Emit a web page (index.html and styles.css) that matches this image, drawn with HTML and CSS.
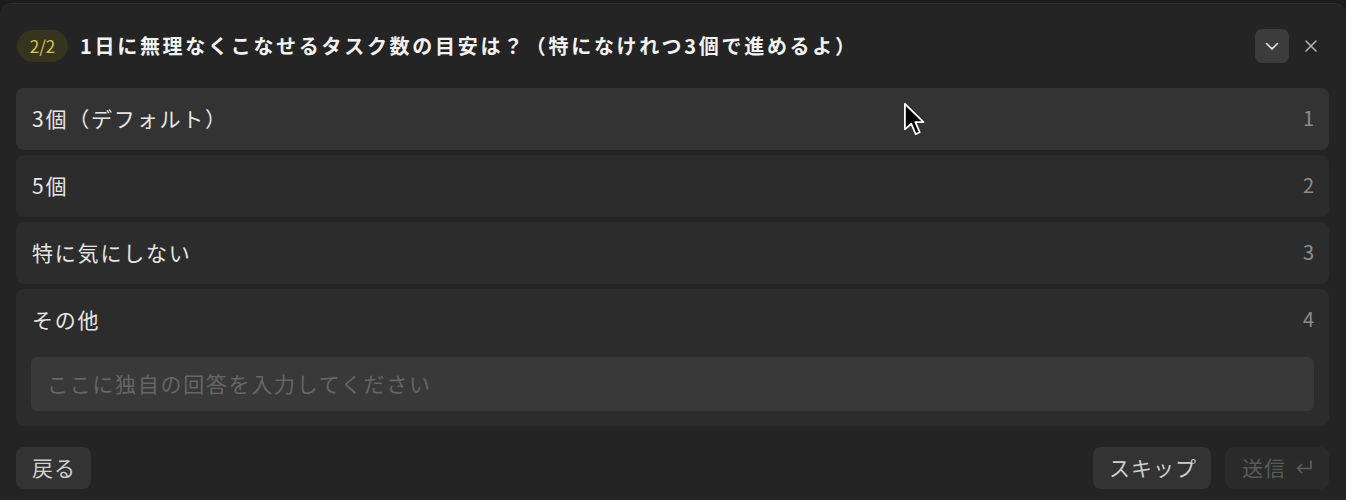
FILE: index.html
```html
<!DOCTYPE html>
<html lang="ja">
<head>
<meta charset="utf-8">
<link rel="stylesheet" href="styles.css">
</head>
<body>
<div class="panel">
  <div class="header">
    <span class="badge">2/2</span>
    <h1 class="title">1日に無理なくこなせるタスク数の目安は？（特になけれつ3個で進めるよ）</h1>
    <div class="header-actions">
      <button class="icon-btn collapse" aria-label="折りたたむ">
        <svg width="14" height="14" viewBox="0 0 14 14"><path d="M1.5 4.5 L7 9.8 L12.5 4.5" fill="none" stroke="#e6e6e6" stroke-width="1.6" stroke-linecap="round" stroke-linejoin="round"/></svg>
      </button>
      <button class="icon-btn close" aria-label="閉じる">
        <svg width="14" height="14" viewBox="0 0 14 14"><path d="M2 2 L12 12 M12 2 L2 12" fill="none" stroke="#b5b5b5" stroke-width="1.5" stroke-linecap="round"/></svg>
      </button>
    </div>
  </div>
  <div class="options">
    <div class="option hover"><span class="label">3個（デフォルト）</span><span class="num">1</span></div>
    <div class="option"><span class="label">5個</span><span class="num">2</span></div>
    <div class="option"><span class="label">特に気にしない</span><span class="num">3</span></div>
    <div class="option other">
      <div class="other-row"><span class="label">その他</span><span class="num">4</span></div>
      <div class="input">ここに独自の回答を入力してください</div>
    </div>
  </div>
  <div class="footer">
    <button class="btn">戻る</button>
    <div class="footer-right">
      <button class="btn skip">スキップ</button>
      <button class="btn disabled">送信
        <svg width="20" height="16" viewBox="0 0 20 16"><path d="M17 2 V9.5 H3.5 M7.5 5.5 L3.5 9.5 L7.5 13.5" fill="none" stroke="#5e5e5e" stroke-width="1.7" stroke-linecap="round" stroke-linejoin="round"/></svg>
      </button>
    </div>
  </div>
  <svg class="cursor" width="24" height="38" viewBox="0 0 20 32"><path d="M1.5 1.5 L1.5 23 L6.8 18.3 L10.6 27 L14 25.5 L10.3 17 L17.2 17 Z" fill="#000" stroke="#fff" stroke-width="1.5" stroke-linejoin="round"/></svg>
</div>
</body>
</html>
```
FILE: styles.css
```css
* { box-sizing: border-box; }
html, body { margin: 0; padding: 0; }
body {
  background: #1c1c1c;
  font-family: "Noto Sans CJK JP", "Noto Sans", sans-serif;
  color: #e8e8e8;
  width: 1346px;
  height: 500px;
  overflow: hidden;
}
.panel {
  position: relative;
  margin-top: 3px;
  height: 497px;
  background: #242424;
  border-top: 1px solid #2f2f2f;
  border-radius: 12px 12px 0 0;
  padding: 0 17px 0 16px;
}
.header {
  display: flex;
  align-items: center;
  height: 84px;
  padding-bottom: 1px;
}
.badge {
  display: inline-flex;
  align-items: center;
  justify-content: center;
  width: 51px;
  height: 32px;
  border-radius: 16px;
  background: #36331f;
  color: #d9c24c;
  font-size: 17px;
  margin-left: 1px;
}
.title {
  margin: 0 0 0 12px;
  font-size: 20px;
  font-weight: 700;
  color: #f2f2f2;
  flex: 1;
  letter-spacing: 2.7px;
}
.header-actions {
  display: flex;
  align-items: center;
  gap: 4px;
}
.icon-btn {
  display: inline-flex;
  align-items: center;
  justify-content: center;
  border: none;
  padding: 0;
  background: transparent;
}
.collapse {
  width: 34px;
  height: 34px;
  border-radius: 7px;
  background: #3c3c3c;
}
.close {
  width: 36px;
  height: 34px;
}
.options {
  display: flex;
  flex-direction: column;
  gap: 5px;
}
.option {
  display: flex;
  align-items: center;
  justify-content: space-between;
  height: 62px;
  padding: 0 15px 3px 16px;
  background: #2c2c2c;
  border-radius: 8px;
  font-size: 21px;
  letter-spacing: 1.8px;
}
.option.hover { background: #333333; }
.label { color: #e6e6e6; }
.num { color: #8c8c8c; font-size: 20px; letter-spacing: 0; }
.option.other {
  flex-direction: column;
  align-items: stretch;
  height: 137px;
  padding: 0 15px 15px 15px;
}
.other-row {
  display: flex;
  align-items: center;
  justify-content: space-between;
  height: 62px;
  padding: 0 0 3px 1px;
  margin-bottom: 6px;
}
.input {
  height: 54px;
  background: #393939;
  border-radius: 6px;
  display: flex;
  align-items: center;
  padding: 0 0 2px 16px;
  color: #666666;
  font-size: 21px;
  letter-spacing: 1.7px;
}
.footer {
  display: flex;
  justify-content: space-between;
  align-items: center;
  margin-top: 21px;
}
.footer-right { display: flex; gap: 14px; }
.btn {
  font-family: inherit;
  display: inline-flex;
  align-items: center;
  gap: 6px;
  height: 42px;
  border: none;
  border-radius: 8px;
  background: #333333;
  color: #cfcfcf;
  font-size: 21px;
  letter-spacing: 1px;
  padding: 0 15px 2px 16px;
}
.btn.skip { padding: 0 14px 2px 16px; }
.btn.disabled {
  background: #2a2a2a;
  color: #5a5a5a;
  padding: 0 15px 2px 17px;
  gap: 8px;
}
.cursor {
  position: absolute;
  left: 903px;
  top: 98px;
}
```
